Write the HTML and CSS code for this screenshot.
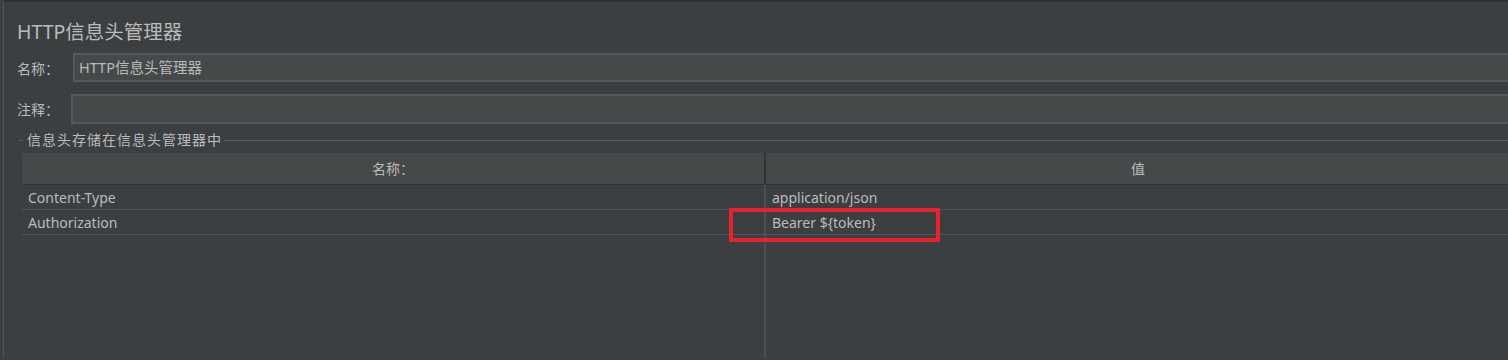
FILE: index.html
```html
<!DOCTYPE html>
<html lang="zh-CN">
<head>
  <meta charset="UTF-8">
  <meta name="viewport" content="width=device-width, initial-scale=1.0">
  <title>HTTP信息头管理器</title>
  <link rel="stylesheet" href="styles.css">
</head>
<body>
  <div class="panel">
    <h1 class="title">HTTP信息头管理器</h1>
    <div class="field">
      <label class="field-label">名称：</label>
      <div class="input">HTTP信息头管理器</div>
    </div>
    <div class="field field-comment">
      <label class="field-label">注释：</label>
      <div class="input"></div>
    </div>
    <div class="group">
      <div class="legend">
        <span class="dash"></span>
        <span class="legend-text">信息头存储在信息头管理器中</span>
        <span class="rule"></span>
      </div>
      <div class="table">
        <div class="row head">
          <div class="cell name">名称：</div>
          <div class="cell value">值</div>
        </div>
        <div class="row">
          <div class="cell name">Content-Type</div>
          <div class="cell value">application/json</div>
        </div>
        <div class="row">
          <div class="cell name">Authorization</div>
          <div class="cell value marked">Bearer ${token}<span class="highlight"></span></div>
        </div>
        <div class="row filler">
          <div class="cell name"></div>
          <div class="cell value"></div>
        </div>
      </div>
    </div>
  </div>
</body>
</html>
```

FILE: styles.css
```css
body {
  margin: 0;
  height: 360px;
  overflow: hidden;
  background-color: #3c3f41;
  color: #bbbbbb;
  font-family: 'Noto Sans', 'Noto Sans CJK SC', sans-serif;
  font-size: 14px;
}

.panel {
  display: flex;
  flex-direction: column;
  height: 358px;
  margin-left: 3px;
  border-top: 2px solid #2e3032;
  border-left: 1px solid #505355;
  padding-left: 13px;
  box-sizing: border-box;
}

.title {
  margin: 18px 0 0;
  height: 24px;
  line-height: 24px;
  font-size: 19.5px;
  font-weight: normal;
  color: #bbbbbb;
}

.field {
  display: flex;
  align-items: center;
  height: 29px;
  margin-top: 9px;
  margin-right: -20px;
}

.field-label {
  width: 56px;
  flex: none;
}

.field-comment {
  height: 30px;
  margin-top: 12px;
}

.field-comment .field-label {
  width: 54px;
}

.input {
  flex: 1;
  height: 100%;
  box-sizing: border-box;
  border: 2px solid #56595b;
  background-color: #45494a;
  padding-left: 4px;
  line-height: 25px;
  font-size: 14.5px;
  color: #bbbbbb;
}

.group {
  flex: 1;
  display: flex;
  flex-direction: column;
  margin-top: 6px;
  margin-right: -2px;
  padding-left: 2px;
}

.legend {
  display: flex;
  align-items: center;
  height: 20px;
}

.dash {
  width: 4px;
  height: 1px;
  background-color: #5a5d5f;
  margin-right: 4px;
}

.legend-text {
  letter-spacing: 1px;
  line-height: 20px;
}

.rule {
  flex: 1;
  height: 1px;
  margin-left: 2px;
  background-color: #5a5d5f;
}

.table {
  flex: 1;
  display: flex;
  flex-direction: column;
  margin-top: 3px;
  margin-left: 3px;
}

.row {
  display: flex;
  height: 25px;
  box-sizing: border-box;
  border-bottom: 1px solid #515557;
}

.cell {
  padding-left: 6px;
  line-height: 25px;
  white-space: nowrap;
}

.cell.name {
  width: 744px;
  flex: none;
  box-sizing: border-box;
  border-right: 2px solid #4c5052;
}

.cell.value {
  flex: 1;
}

.row.head {
  height: 32px;
  background-color: #45494a;
  border-bottom: 1px solid #313335;
}

.row.head .cell {
  padding-left: 0;
  text-align: center;
  line-height: 31px;
}

.row.head .cell.name {
  border-right-color: #313335;
}

.row.filler {
  flex: 1;
  border-bottom: none;
}

.marked {
  position: relative;
}

.highlight {
  position: absolute;
  left: -37px;
  top: -2px;
  width: 211px;
  height: 34px;
  box-sizing: border-box;
  border: 4px solid #e8222b;
}
```
